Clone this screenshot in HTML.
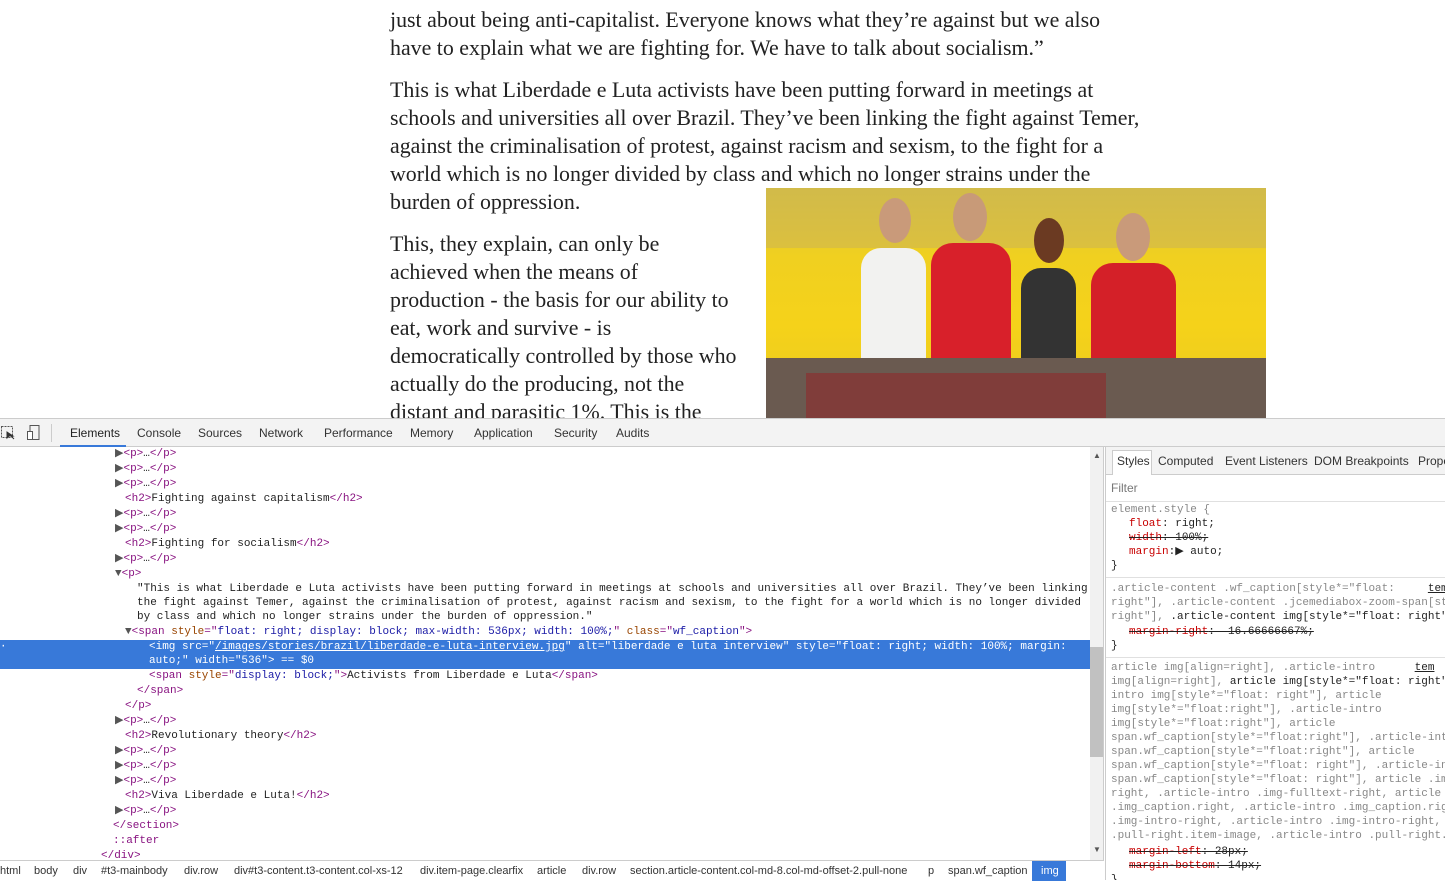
<!DOCTYPE html>
<html><head><style>
*{margin:0;padding:0;box-sizing:border-box}
body{width:1445px;height:879px;overflow:hidden;background:#fff;position:relative;font-family:"Liberation Sans",sans-serif}
.art{position:absolute;left:390px;top:0;width:760px;font-family:"Liberation Serif",serif;font-size:21.9px;line-height:28px;color:#222}
.art p{position:absolute;left:0;white-space:nowrap}
.img{position:absolute;left:766px;top:188px;width:500px;height:230px;overflow:hidden;background:linear-gradient(180deg,#d9c43a 0%,#f0d020 30%,#f5d21a 60%,#e8c820 100%)}
.dt{position:absolute;left:0;top:418px;width:1445px;height:461px;background:#fff;border-top:1px solid #ccc}
.tabs{position:absolute;left:0;top:0;width:1445px;height:28px;background:#f3f3f3;border-bottom:1px solid #ccc;font-size:12px;color:#333}
.tabs span{position:absolute;top:7px}
.code{position:absolute;left:0;top:28px;width:1090px;height:413px;font-family:"Liberation Mono",monospace;font-size:11px;color:#222;overflow:hidden}
.r{position:absolute;height:15px;line-height:15px;white-space:pre}
.t{color:#881280}.a{color:#994500}.v{color:#1a1aa6}.tri{color:#555}
.sel{position:absolute;left:0;top:193px;width:1090px;height:29px;background:#3879d9}
.sel .r{color:#fff}
.sb{position:absolute;left:1090px;top:28px;width:14px;height:413px;background:#f1f1f1;border-right:1px solid #ccc}
.crumb{position:absolute;left:0;top:441px;width:1104px;height:20px;border-top:1px solid #ccc;background:#fff;font-size:11px;color:#333}
.crumb span{position:absolute;top:4px}
.side{position:absolute;left:1105px;top:28px;width:340px;height:433px;font-family:"Liberation Mono",monospace;font-size:11px;color:#222;overflow:hidden}
.st{position:absolute;white-space:pre;line-height:14px}
.g{color:#888}.p{color:#c80000}.s{text-decoration:line-through}
</style></head><body>
<div class="art">
<p style="top:6px">just about being anti-capitalist. Everyone knows what they’re against but we also</p>
<p style="top:34px">have to explain what we are fighting for. We have to talk about socialism.”</p>
<p style="top:76px">This is what Liberdade e Luta activists have been putting forward in meetings at</p>
<p style="top:104px">schools and universities all over Brazil. They’ve been linking the fight against Temer,</p>
<p style="top:132px">against the criminalisation of protest, against racism and sexism, to the fight for a</p>
<p style="top:160px">world which is no longer divided by class and which no longer strains under the</p>
<p style="top:188px">burden of oppression.</p>
<p style="top:230px">This, they explain, can only be</p>
<p style="top:258px">achieved when the means of</p>
<p style="top:286px">production - the basis for our ability to</p>
<p style="top:314px">eat, work and survive - is</p>
<p style="top:342px">democratically controlled by those who</p>
<p style="top:370px">actually do the producing, not the</p>
<p style="top:398px">distant and parasitic 1%. This is the</p>
</div>
<div class="img">
<div style="position:absolute;left:0;top:0;width:500px;height:60px;background:#c9b25a;opacity:.5"></div>
<div style="position:absolute;left:95px;top:60px;width:65px;height:130px;background:#f2f2f0;border-radius:20px 20px 0 0"></div>
<div style="position:absolute;left:113px;top:10px;width:32px;height:45px;background:#c99a7a;border-radius:50%"></div>
<div style="position:absolute;left:165px;top:55px;width:80px;height:140px;background:#d8202a;border-radius:22px 22px 0 0"></div>
<div style="position:absolute;left:187px;top:5px;width:34px;height:48px;background:#c89a78;border-radius:50%"></div>
<div style="position:absolute;left:255px;top:80px;width:55px;height:110px;background:#333;border-radius:20px 20px 0 0"></div>
<div style="position:absolute;left:268px;top:30px;width:30px;height:45px;background:#6b3a22;border-radius:50%"></div>
<div style="position:absolute;left:325px;top:75px;width:85px;height:120px;background:#d42028;border-radius:22px 22px 0 0"></div>
<div style="position:absolute;left:350px;top:25px;width:34px;height:48px;background:#c99a7a;border-radius:50%"></div>
<div style="position:absolute;left:0;top:170px;width:500px;height:60px;background:#6a5a50"></div>
<div style="position:absolute;left:40px;top:185px;width:300px;height:45px;background:#8a3030;opacity:.7"></div>
</div>
<div class="dt">
<div class="tabs">
<svg style="position:absolute;left:0;top:6px" width="16" height="16"><rect x="1.5" y="1.5" width="11" height="11" fill="none" stroke="#555" stroke-dasharray="2 1"/><path d="M7 7l7 7M7 7v6l2-2h4z" stroke="#333" fill="#333"/></svg>
<svg style="position:absolute;left:26px;top:5px" width="16" height="18"><rect x="4" y="1.5" width="9" height="14" fill="none" stroke="#555"/><rect x="1.5" y="7.5" width="5" height="8" fill="#fff" stroke="#555"/></svg>
<div style="position:absolute;left:51px;top:5px;width:1px;height:18px;background:#ccc"></div>
<span style="left:70px;color:#222">Elements</span>
<div style="position:absolute;left:60px;top:26px;width:66px;height:2px;background:#3879d9"></div>
<span style="left:137px">Console</span><span style="left:198px">Sources</span><span style="left:259px">Network</span><span style="left:324px">Performance</span><span style="left:410px">Memory</span><span style="left:474px">Application</span><span style="left:554px">Security</span><span style="left:616px">Audits</span>
</div>
<div class="code">
<div class="r" style="left:115px;top:0"><span class="tri">▶</span><span class="t">&lt;p&gt;</span>…<span class="t">&lt;/p&gt;</span></div>
<div class="r" style="left:115px;top:15px"><span class="tri">▶</span><span class="t">&lt;p&gt;</span>…<span class="t">&lt;/p&gt;</span></div>
<div class="r" style="left:115px;top:30px"><span class="tri">▶</span><span class="t">&lt;p&gt;</span>…<span class="t">&lt;/p&gt;</span></div>
<div class="r" style="left:125px;top:45px"><span class="t">&lt;h2&gt;</span>Fighting against capitalism<span class="t">&lt;/h2&gt;</span></div>
<div class="r" style="left:115px;top:60px"><span class="tri">▶</span><span class="t">&lt;p&gt;</span>…<span class="t">&lt;/p&gt;</span></div>
<div class="r" style="left:115px;top:75px"><span class="tri">▶</span><span class="t">&lt;p&gt;</span>…<span class="t">&lt;/p&gt;</span></div>
<div class="r" style="left:125px;top:90px"><span class="t">&lt;h2&gt;</span>Fighting for socialism<span class="t">&lt;/h2&gt;</span></div>
<div class="r" style="left:115px;top:105px"><span class="tri">▶</span><span class="t">&lt;p&gt;</span>…<span class="t">&lt;/p&gt;</span></div>
<div class="r" style="left:115px;top:120px"><span class="tri">▼</span><span class="t">&lt;p&gt;</span></div>
<div class="r" style="left:137px;top:135px">"This is what Liberdade e Luta activists have been putting forward in meetings at schools and universities all over Brazil. They’ve been linking</div>
<div class="r" style="left:137px;top:149px">the fight against Temer, against the criminalisation of protest, against racism and sexism, to the fight for a world which is no longer divided</div>
<div class="r" style="left:137px;top:163px">by class and which no longer strains under the burden of oppression."</div>
<div class="r" style="left:125px;top:178px"><span class="tri">▼</span><span class="t">&lt;span </span><span class="a">style</span><span class="t">="</span><span class="v">float: right; display: block; max-width: 536px; width: 100%;</span><span class="t">" </span><span class="a">class</span><span class="t">="</span><span class="v">wf_caption</span><span class="t">"&gt;</span></div>
<div class="sel">
<div class="r" style="left:0;top:0">·</div>
<div class="r" style="left:149px;top:0">&lt;img src="<u>/images/stories/brazil/liberdade-e-luta-interview.jpg</u>" alt="liberdade e luta interview" style="float: right; width: 100%; margin:</div>
<div class="r" style="left:149px;top:14px">auto;" width="536"&gt; == $0</div>
</div>
<div class="r" style="left:149px;top:222px"><span class="t">&lt;span </span><span class="a">style</span><span class="t">="</span><span class="v">display: block;</span><span class="t">"&gt;</span>Activists from Liberdade e Luta<span class="t">&lt;/span&gt;</span></div>
<div class="r" style="left:137px;top:237px"><span class="t">&lt;/span&gt;</span></div>
<div class="r" style="left:125px;top:252px"><span class="t">&lt;/p&gt;</span></div>
<div class="r" style="left:115px;top:267px"><span class="tri">▶</span><span class="t">&lt;p&gt;</span>…<span class="t">&lt;/p&gt;</span></div>
<div class="r" style="left:125px;top:282px"><span class="t">&lt;h2&gt;</span>Revolutionary theory<span class="t">&lt;/h2&gt;</span></div>
<div class="r" style="left:115px;top:297px"><span class="tri">▶</span><span class="t">&lt;p&gt;</span>…<span class="t">&lt;/p&gt;</span></div>
<div class="r" style="left:115px;top:312px"><span class="tri">▶</span><span class="t">&lt;p&gt;</span>…<span class="t">&lt;/p&gt;</span></div>
<div class="r" style="left:115px;top:327px"><span class="tri">▶</span><span class="t">&lt;p&gt;</span>…<span class="t">&lt;/p&gt;</span></div>
<div class="r" style="left:125px;top:342px"><span class="t">&lt;h2&gt;</span>Viva Liberdade e Luta!<span class="t">&lt;/h2&gt;</span></div>
<div class="r" style="left:115px;top:357px"><span class="tri">▶</span><span class="t">&lt;p&gt;</span>…<span class="t">&lt;/p&gt;</span></div>
<div class="r" style="left:113px;top:372px"><span class="t">&lt;/section&gt;</span></div>
<div class="r" style="left:113px;top:387px"><span class="t">::after</span></div>
<div class="r" style="left:101px;top:402px"><span class="t">&lt;/div&gt;</span></div>
</div>
<div class="sb"><div style="position:absolute;left:0;top:200px;width:13px;height:110px;background:#c1c1c1"></div><div style="position:absolute;left:3px;top:4px;font-size:8px;color:#555">▲</div><div style="position:absolute;left:3px;top:398px;font-size:8px;color:#555">▼</div></div>
<div class="crumb">
<span style="left:0">html</span><span style="left:34px">body</span><span style="left:73px">div</span><span style="left:101px">#t3-mainbody</span><span style="left:184px">div.row</span><span style="left:234px">div#t3-content.t3-content.col-xs-12</span><span style="left:420px">div.item-page.clearfix</span><span style="left:537px">article</span><span style="left:582px">div.row</span><span style="left:630px">section.article-content.col-md-8.col-md-offset-2.pull-none</span><span style="left:928px">p</span><span style="left:948px">span.wf_caption</span>
<div style="position:absolute;left:1032px;top:0;width:34px;height:20px;background:#3879d9"></div><span style="left:1041px;color:#fff">img</span>
</div>
<div class="side" style="border-left:1px solid #ccc">
<div style="position:absolute;left:0;top:0;width:340px;height:28px;background:#f3f3f3;border-bottom:1px solid #ccc;font-family:'Liberation Sans',sans-serif;font-size:12px;color:#333">
<div style="position:absolute;left:6px;top:3px;width:40px;height:25px;background:#fff;border:1px solid #ccc;border-bottom:none"></div>
<span style="position:absolute;left:11px;top:7px">Styles</span><span style="position:absolute;left:52px;top:7px">Computed</span><span style="position:absolute;left:119px;top:7px">Event Listeners</span><span style="position:absolute;left:208px;top:7px">DOM Breakpoints</span><span style="position:absolute;left:312px;top:7px">Properties</span>
</div>
<div style="position:absolute;left:5px;top:34px;font-family:'Liberation Sans',sans-serif;font-size:12px;color:#777">Filter</div>
<div style="position:absolute;left:0;top:54px;width:340px;border-top:1px solid #e0e0e0"></div>
<div class="st g" style="left:5px;top:56px">element.style {</div>
<div class="st" style="left:23px;top:70px"><span class="p">float</span>: right;</div>
<div class="st s" style="left:23px;top:84px"><span class="p">width</span>: 100%;</div>
<div class="st" style="left:23px;top:98px"><span class="p">margin</span>:▶ auto;</div>
<div class="st" style="left:5px;top:112px">}</div>
<div style="position:absolute;left:0;top:130px;width:340px;border-top:1px solid #e0e0e0"></div>
<div class="st g" style="left:5px;top:135px">.article-content .wf_caption[style*="float:     <u style="color:#222">tem</u>
right"], .article-content .jcemediabox-zoom-span[st
right"], <span style="color:#222">.article-content img[style*="float: right"</span></div>
<div class="st s" style="left:23px;top:178px"><span class="p">margin-right</span>:  16.66666667%;</div>
<div class="st" style="left:5px;top:192px">}</div>
<div style="position:absolute;left:0;top:210px;width:340px;border-top:1px solid #e0e0e0"></div>
<div class="st g" style="left:5px;top:214px">article img[align=right], .article-intro      <u style="color:#222">tem</u>
img[align=right], <span style="color:#222">article img[style*="float: right"</span>
intro img[style*="float: right"], article
img[style*="float:right"], .article-intro
img[style*="float:right"], article
span.wf_caption[style*="float:right"], .article-int
span.wf_caption[style*="float:right"], article
span.wf_caption[style*="float: right"], .article-in
span.wf_caption[style*="float: right"], article .im
right, .article-intro .img-fulltext-right, article
.img_caption.right, .article-intro .img_caption.rig
.img-intro-right, .article-intro .img-intro-right,
.pull-right.item-image, .article-intro .pull-right.</div>
<div class="st s" style="left:23px;top:398px"><span class="p">margin-left</span>: 28px;</div>
<div class="st s" style="left:23px;top:412px"><span class="p">margin-bottom</span>: 14px;</div>
<div class="st" style="left:5px;top:426px">}</div>
</div>
</div>
</body></html>
